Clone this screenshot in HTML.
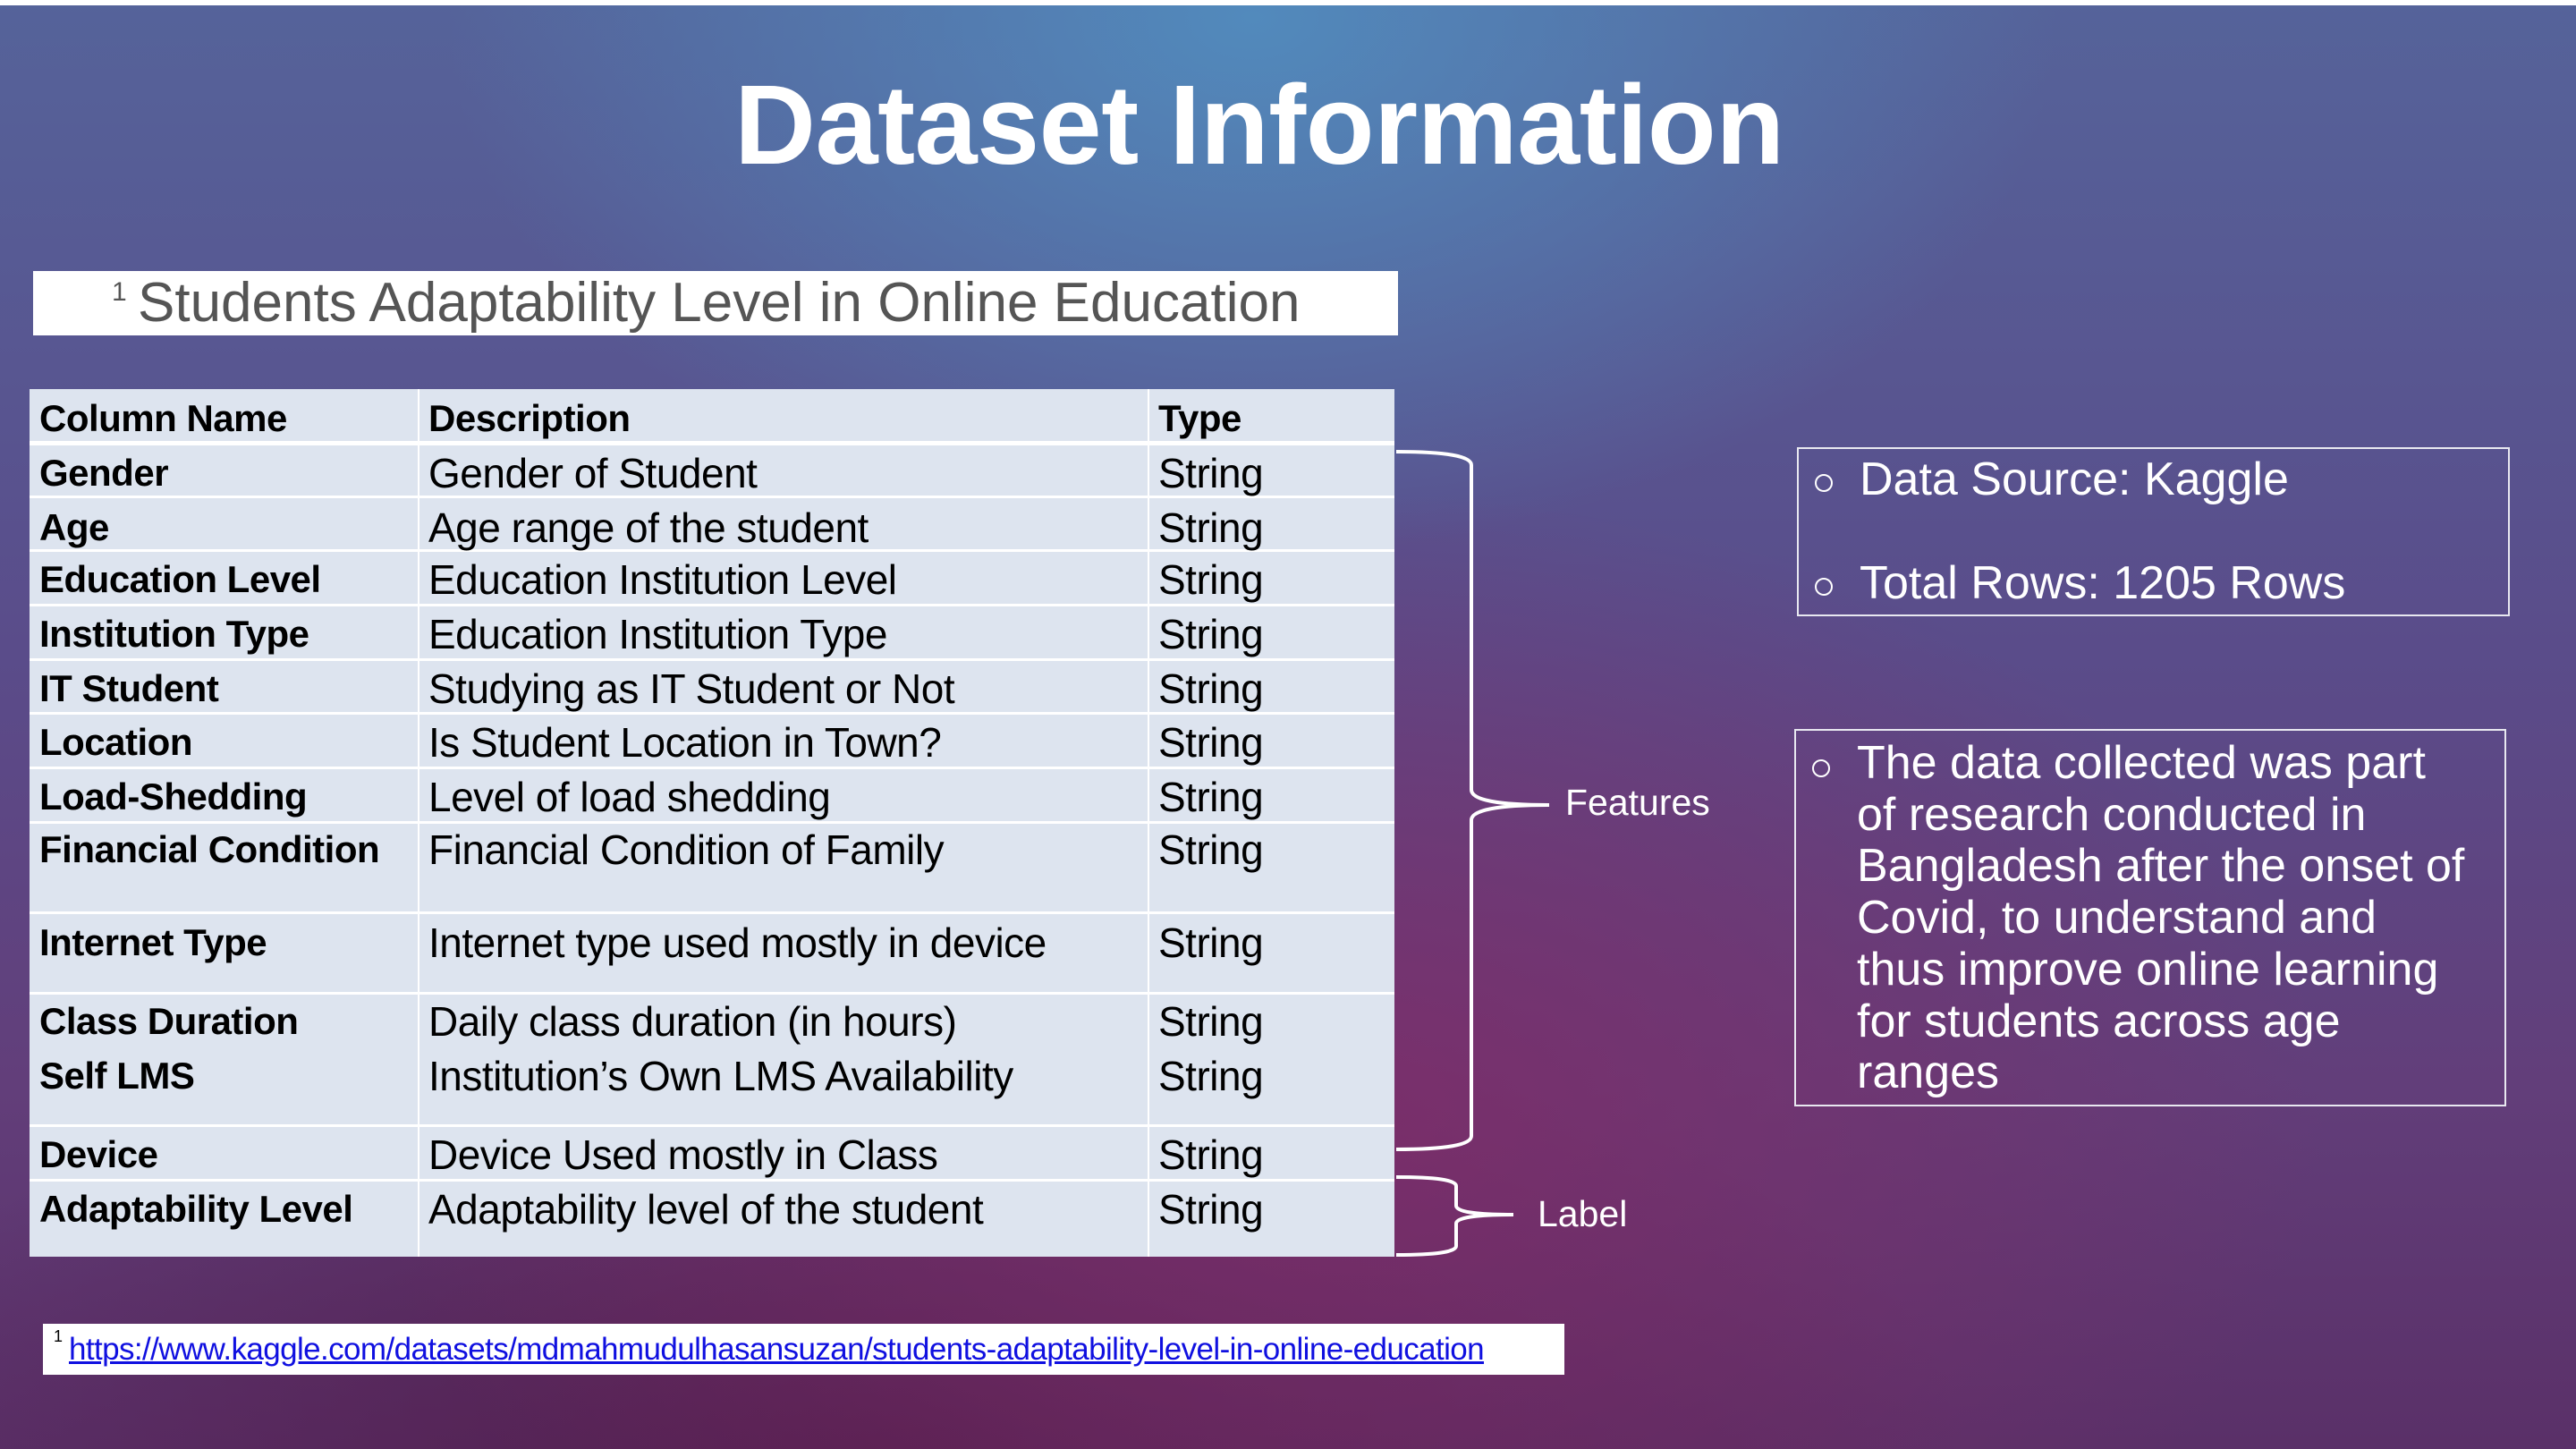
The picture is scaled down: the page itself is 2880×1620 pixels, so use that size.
<!DOCTYPE html>
<html><head><meta charset="utf-8"><style>
*{margin:0;padding:0;box-sizing:border-box}
body{width:2880px;height:1620px;overflow:hidden;position:relative;font-family:"Liberation Sans",sans-serif;
background:
radial-gradient(ellipse 900px 600px at 1400px 20px, rgba(82,140,190,0.95), rgba(82,140,190,0) 100%),
radial-gradient(ellipse 1100px 700px at 1500px 1250px, rgba(125,45,105,0.9), rgba(125,45,105,0) 100%),
radial-gradient(ellipse 1200px 500px at 1000px 1620px, rgba(80,25,70,0.8), rgba(80,25,70,0) 100%),
linear-gradient(180deg,#55639a 0%,#5a4c8a 45%,#623e7a 75%,#5a3068 100%);}
.top{position:absolute;left:0;top:0;width:2880px;height:6px;background:#fff}
h1{position:absolute;left:821px;top:70px;color:#fff;font-weight:bold;font-size:126px;line-height:140px;white-space:nowrap;letter-spacing:-0.5px}
.sub{position:absolute;left:37px;top:303px;width:1526px;height:72px;background:#fff;color:#555;font-size:62px;line-height:72px;padding-left:117px;white-space:nowrap}
.sub sup{font-size:30px;position:absolute;left:88px;top:-12px;line-height:72px}
.tbl{position:absolute;left:33px;top:435px;width:1526px;height:970px;background:#dde4ef}
.hl{position:absolute;left:0;width:1526px;height:3px;background:#fff}
.vl{position:absolute;top:0;height:970px;width:2px;background:#fff}
.t{position:absolute;font-size:46px;color:#000;white-space:nowrap;line-height:50px;letter-spacing:-0.5px}
.b{font-weight:bold;font-size:42px}
.box{position:absolute;border:2px solid #e8e8f0;color:#fff;font-size:52px}
.box p{position:relative;padding-left:68px;white-space:nowrap}
.box p:before{content:"";position:absolute;left:18px;top:24px;width:16px;height:16px;border:2.5px solid #fff;border-radius:50%}
.lbl{position:absolute;color:#fff;font-size:41px}
.foot{position:absolute;left:48px;top:1480px;width:1701px;height:57px;background:#fff;font-size:35px;line-height:57px;padding-left:29px;white-space:nowrap;letter-spacing:-0.6px}
.foot a{color:#1010e0;text-decoration:underline}
.foot sup{font-size:18px;position:absolute;left:12px;top:-14px}
</style></head><body>
<div class="top"></div>
<h1>Dataset Information</h1>
<div class="sub"><sup>1</sup>Students Adaptability Level in Online Education</div>
<div class="tbl">
<div class="hl" style="top:58px;height:5px"></div>
<div class="hl" style="top:119px"></div>
<div class="hl" style="top:179px"></div>
<div class="hl" style="top:240px"></div>
<div class="hl" style="top:301px"></div>
<div class="hl" style="top:361px"></div>
<div class="hl" style="top:422px"></div>
<div class="hl" style="top:483px"></div>
<div class="hl" style="top:584px"></div>
<div class="hl" style="top:674px"></div>
<div class="hl" style="top:822px"></div>
<div class="hl" style="top:883px"></div>
<div class="vl" style="left:434px"></div>
<div class="vl" style="left:1250px"></div>
</div>
<div class="t b" style="left:44px;top:443px">Column Name</div><div class="t b" style="left:479px;top:443px">Description</div><div class="t b" style="left:1295px;top:443px">Type</div>
<div class="t b" style="left:44px;top:504px">Gender</div><div class="t" style="left:479px;top:504px">Gender of Student</div><div class="t" style="left:1295px;top:504px">String</div>
<div class="t b" style="left:44px;top:565px">Age</div><div class="t" style="left:479px;top:565px">Age range of the student</div><div class="t" style="left:1295px;top:565px">String</div>
<div class="t b" style="left:44px;top:623px">Education Level</div><div class="t" style="left:479px;top:623px">Education Institution Level</div><div class="t" style="left:1295px;top:623px">String</div>
<div class="t b" style="left:44px;top:684px">Institution Type</div><div class="t" style="left:479px;top:684px">Education Institution Type</div><div class="t" style="left:1295px;top:684px">String</div>
<div class="t b" style="left:44px;top:745px">IT Student</div><div class="t" style="left:479px;top:745px">Studying as IT Student or Not</div><div class="t" style="left:1295px;top:745px">String</div>
<div class="t b" style="left:44px;top:805px">Location</div><div class="t" style="left:479px;top:805px">Is Student Location in Town?</div><div class="t" style="left:1295px;top:805px">String</div>
<div class="t b" style="left:44px;top:866px">Load-Shedding</div><div class="t" style="left:479px;top:866px">Level of load shedding</div><div class="t" style="left:1295px;top:866px">String</div>
<div class="t b" style="left:44px;top:925px">Financial Condition</div><div class="t" style="left:479px;top:925px">Financial Condition of Family</div><div class="t" style="left:1295px;top:925px">String</div>
<div class="t b" style="left:44px;top:1029px">Internet Type</div><div class="t" style="left:479px;top:1029px">Internet type used mostly in device</div><div class="t" style="left:1295px;top:1029px">String</div>
<div class="t b" style="left:44px;top:1117px">Class Duration</div><div class="t" style="left:479px;top:1117px">Daily class duration (in hours)</div><div class="t" style="left:1295px;top:1117px">String</div>
<div class="t b" style="left:44px;top:1178px">Self LMS</div><div class="t" style="left:479px;top:1178px">Institution’s Own LMS Availability</div><div class="t" style="left:1295px;top:1178px">String</div>
<div class="t b" style="left:44px;top:1266px">Device</div><div class="t" style="left:479px;top:1266px">Device Used mostly in Class</div><div class="t" style="left:1295px;top:1266px">String</div>
<div class="t b" style="left:44px;top:1327px">Adaptability Level</div><div class="t" style="left:479px;top:1327px">Adaptability level of the student</div><div class="t" style="left:1295px;top:1327px">String</div>

<svg style="position:absolute;left:0;top:0" width="2880" height="1620" fill="none" stroke="#fff" stroke-width="4">
<path d="M1561 505 Q1645 505 1645 520 L1645 883 Q1645 900 1732 900 Q1645 900 1645 917 L1645 1270 Q1645 1285 1561 1285"/>
<path d="M1561 1316 Q1628 1316 1628 1326 L1628 1348 Q1628 1358 1692 1358 Q1628 1358 1628 1368 L1628 1393 Q1628 1403 1561 1403"/>
</svg>
<div class="lbl" style="left:1750px;top:874px">Features</div>
<div class="lbl" style="left:1719px;top:1334px">Label</div>

<div class="box" style="left:2009px;top:500px;width:797px;height:189px">
<p style="position:absolute;top:4px;line-height:60px">Data Source: Kaggle</p>
<p style="position:absolute;top:120px;line-height:60px">Total Rows: 1205 Rows</p>
</div>
<div class="box" style="left:2006px;top:815px;width:796px;height:422px;padding-top:8px;line-height:57.7px">
<p>The data collected was part<br>of research conducted in<br>Bangladesh after the onset of<br>Covid, to understand and<br>thus improve online learning<br>for students across age<br>ranges</p>
</div>

<div class="foot"><sup>1</sup><a>https://www.kaggle.com/datasets/mdmahmudulhasansuzan/students-adaptability-level-in-online-education</a></div>
</body></html>
